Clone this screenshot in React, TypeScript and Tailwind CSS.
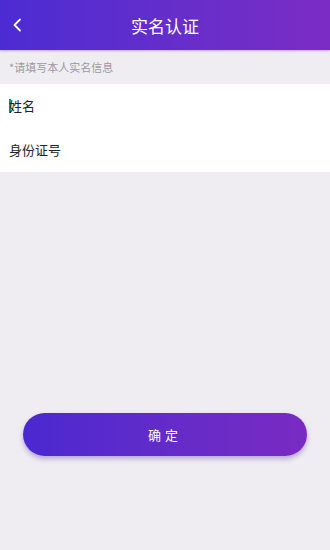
export default function App() {
  return (
    <div
      className="w-[330px] h-[550px] bg-[#efedf2] flex flex-col"
      style={{ fontFamily: '"Noto Sans CJK SC", "Noto Sans", sans-serif' }}
    >
      <header className="h-[50px] bg-gradient-to-r from-[#4b2bd2] to-[#7b2cc4] flex items-center relative shadow-[0_1px_2px_rgba(170,110,230,0.6)]">
        <button className="absolute left-[12px] top-[18px] text-white">
          <svg width="10" height="14" viewBox="0 0 10 14" fill="none">
            <path d="M8 1.5 L2.5 7 L8 12.5" stroke="currentColor" strokeWidth="1.8" strokeLinecap="round" strokeLinejoin="round" />
          </svg>
        </button>
        <h1 className="flex-1 text-center text-white text-[17px] leading-none">实名认证</h1>
      </header>
      <p className="h-[34px] flex items-center px-[9px] text-[11px] text-[#9a9a9f]">*请填写本人实名信息</p>
      <div className="bg-white flex flex-col">
        <div className="h-[44px] flex items-center px-[9px] text-[13px] text-[#222]">
          <span className="w-[2px] h-[14px] bg-[#1f8a7a] mr-px" />
          <span className="-ml-[3px]">姓名</span>
        </div>
        <div className="h-[44px] flex items-center px-[9px] text-[13px] text-[#222]">身份证号</div>
      </div>
      <div className="flex-1 flex flex-col px-[23px] pt-[241px]">
        <button className="h-[43px] rounded-full bg-gradient-to-r from-[#4a28d0] to-[#7a2ac2] text-white text-[13px] tracking-[4px] shadow-[0_3px_5px_rgba(80,40,160,0.35)]">
          确定
        </button>
      </div>
    </div>
  );
}
